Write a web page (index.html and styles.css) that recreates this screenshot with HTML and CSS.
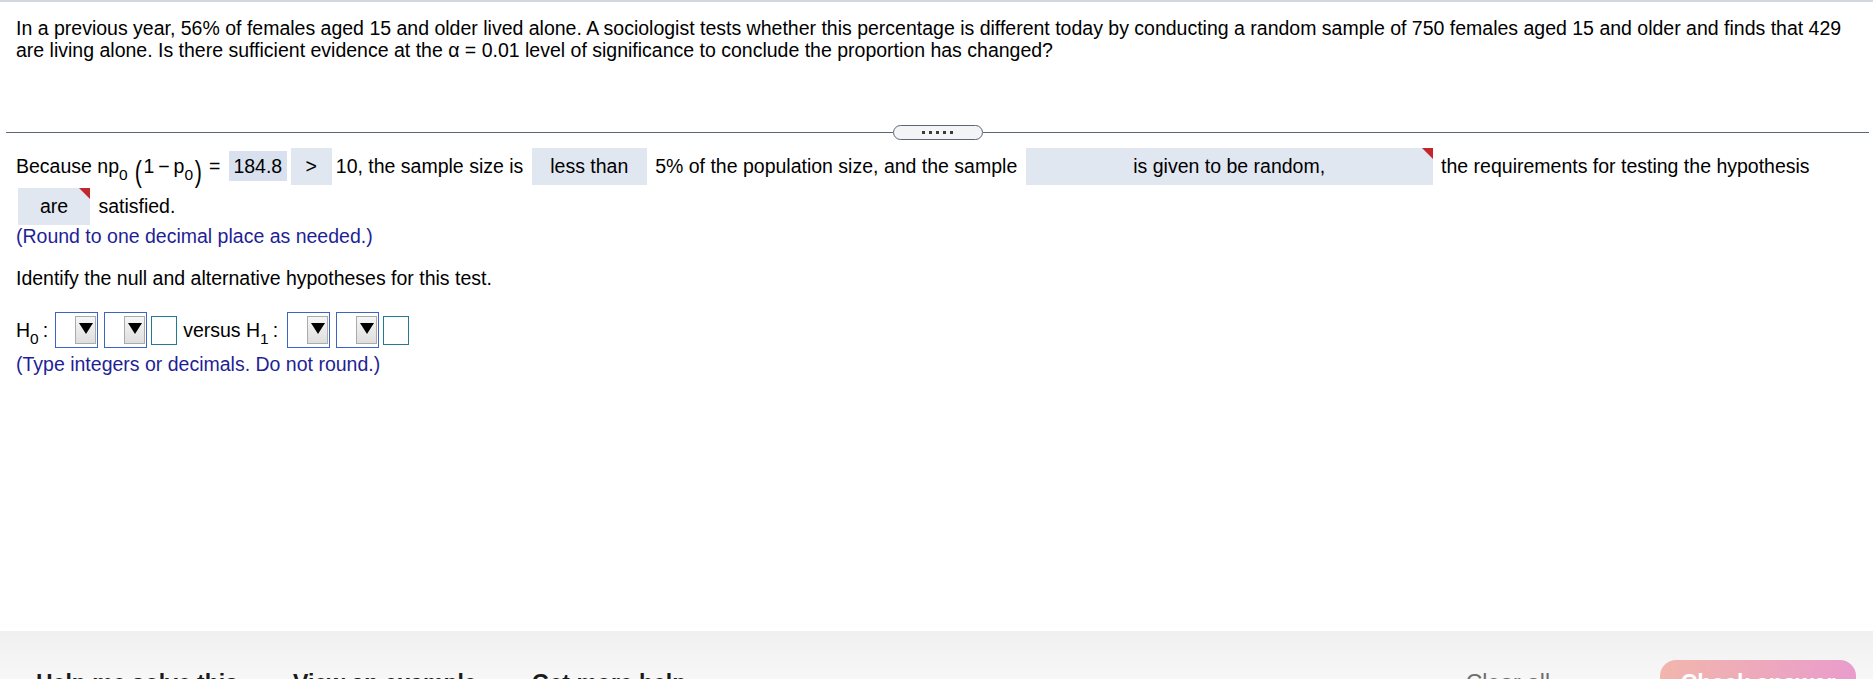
FILE: index.html
```html
<!DOCTYPE html>
<html lang="en">
<head>
<meta charset="utf-8">
<title>Hypothesis test</title>
<link rel="stylesheet" href="styles.css">
</head>
<body>
<div class="page">
  <div class="question">
    <p>In a previous year, 56% of females aged 15 and older lived alone. A sociologist tests whether this percentage is different today by conducting a random sample of 750 females aged 15 and older and finds that 429 are living alone. Is there sufficient evidence at the α = 0.01 level of significance to conclude the proportion has changed?</p>
  </div>

  <div class="divider">
    <span class="rule"></span>
    <span class="handle"><i></i><i></i><i></i><i></i><i></i></span>
    <span class="rule"></span>
  </div>

  <div class="answer">
    <p class="req">Because np<span class="sub">0</span> <span class="paren">(</span>1&#8201;&#8722;&#8201;p<span class="sub">0</span><span class="paren">)</span> = <span class="box val">184.8</span><span class="box gt">&gt;</span>10, the sample size is <span class="box less">less than</span> 5% of the population size, and the sample <span class="box rand flag">is given to be random,</span> the requirements for testing the hypothesis <span class="box are flag">are</span> satisfied.</p>
    <p class="note">(Round to one decimal place as needed.)</p>
    <p class="prompt">Identify the null and alternative hypotheses for this test.</p>
    <div class="hyp">
      <span class="hlabel">H<span class="sub">0</span><span class="colon">:</span></span>
      <span class="select first"><span class="dd"><svg width="14" height="11" viewBox="0 0 14 11"><polygon points="0,0 14,0 7,11" fill="#000"/></svg></span></span>
      <span class="select"><span class="dd"><svg width="14" height="11" viewBox="0 0 14 11"><polygon points="0,0 14,0 7,11" fill="#000"/></svg></span></span>
      <span class="input"></span>
      <span class="hlabel versus">versus H<span class="sub">1</span><span class="colon">:</span></span>
      <span class="select first"><span class="dd"><svg width="14" height="11" viewBox="0 0 14 11"><polygon points="0,0 14,0 7,11" fill="#000"/></svg></span></span>
      <span class="select"><span class="dd"><svg width="14" height="11" viewBox="0 0 14 11"><polygon points="0,0 14,0 7,11" fill="#000"/></svg></span></span>
      <span class="input"></span>
    </div>
    <p class="note note2">(Type integers or decimals. Do not round.)</p>
  </div>

  <div class="footer">
    <div class="links">
      <span class="link">Help me solve this</span>
      <span class="link">View an example</span>
      <span class="link">Get more help</span>
    </div>
    <span class="clear">Clear all</span>
    <span class="check">Check answer</span>
  </div>
</div>
</body>
</html>
```

FILE: styles.css
```css
* { box-sizing: border-box; }
html, body { margin: 0; padding: 0; }
body {
  font-family: "Liberation Sans", Arial, sans-serif;
  font-size: 19.5px;
  color: #000;
  background: #fff;
}
.page {
  height: 679px;
  display: flex;
  flex-direction: column;
  border-top: 2px solid #d3d7e0;
  overflow: hidden;
}
.question {
  padding: 15px 12px 0 16px;
  line-height: 22px;
}
.question p { margin: 0; }

.divider {
  display: flex;
  align-items: center;
  margin: 64px 4px 0 6px;
  height: 15px;
}
.rule {
  flex: 1;
  height: 1px;
  background: #5b6676;
}
.handle {
  width: 90px;
  height: 15px;
  border: 1px solid #5b6676;
  border-radius: 8px;
  background: #f3f4f6;
  display: flex;
  justify-content: center;
  align-items: center;
  gap: 4px;
}
.handle i {
  width: 3px;
  height: 3px;
  background: #3a3a3a;
}

.answer {
  padding: 0 12px 0 16px;
  margin-top: 6px;
}
.req {
  margin: 0;
  line-height: 40px;
}
.sub {
  font-size: 15.5px;
  vertical-align: -7px;
  line-height: 0;
}
.paren {
  display: inline-block;
  transform: scale(1.1, 1.5);
  vertical-align: -5px;
  line-height: 22px;
  margin: 0 2px;
}
.box {
  position: relative;
  display: inline-block;
  height: 37px;
  line-height: 37px;
  background: #e1e7f1;
  text-align: center;
  margin: 0 3px;
  vertical-align: baseline;
}
.val {
  width: 58px;
  height: 30px;
  line-height: 30px;
  background: #d9e1ee;
  margin-right: 1px;
}
.gt { width: 41px; margin-right: 4px; }
.less { width: 115px; }
.rand { width: 407px; }
.are { width: 72px; margin-left: 2px; }
.flag::after {
  content: "";
  position: absolute;
  top: 0;
  right: 0;
  border-top: 11px solid #c1272d;
  border-left: 11px solid transparent;
}

.note {
  margin: 0;
  line-height: 20px;
  color: #1f1f96;
}
.prompt {
  margin: 21px 0 0;
  line-height: 22px;
}
.hyp {
  display: flex;
  align-items: center;
  height: 38px;
  margin-top: 22px;
  line-height: 22px;
}
.hlabel { white-space: nowrap; }
.colon { margin-left: 4px; }
.versus { margin-left: 6px; margin-right: 2px; }
.select {
  width: 43px;
  height: 36px;
  border: 1px solid #3b63c8;
  display: flex;
  justify-content: flex-end;
  align-items: center;
  padding: 0 1px;
  margin-left: 6px;
}
.select.first { margin-left: 7px; }
.dd {
  width: 21px;
  height: 28px;
  border: 1px solid #ababab;
  background: linear-gradient(#f6f6f6, #dedede);
  display: flex;
  justify-content: center;
  align-items: flex-start;
  padding-top: 6px;
}
.dd svg { display: block; }
.input {
  width: 26px;
  height: 29px;
  border: 1px solid #217a8f;
  margin-left: 4px;
}
.note2 {
  margin-top: 4px;
  line-height: 22px;
}

.footer {
  margin-top: auto;
  flex-shrink: 0;
  height: 48px;
  background: linear-gradient(#f0f0f0, #f7f7f7);
  display: flex;
  align-items: flex-start;
  padding: 29px 17px 0 36px;
  font-size: 23px;
  line-height: 46px;
}
.links {
  display: flex;
  gap: 55px;
}
.link {
  font-weight: bold;
  color: #1a1a1a;
}
.clear {
  margin-left: auto;
  margin-right: 110px;
  color: #6e6e6e;
}
.check {
  width: 196px;
  height: 46px;
  border-radius: 16px;
  background: linear-gradient(90deg, #f2b6ac, #e99ccc);
  color: #fff;
  font-weight: bold;
  text-align: center;
  flex-shrink: 0;
}
```
